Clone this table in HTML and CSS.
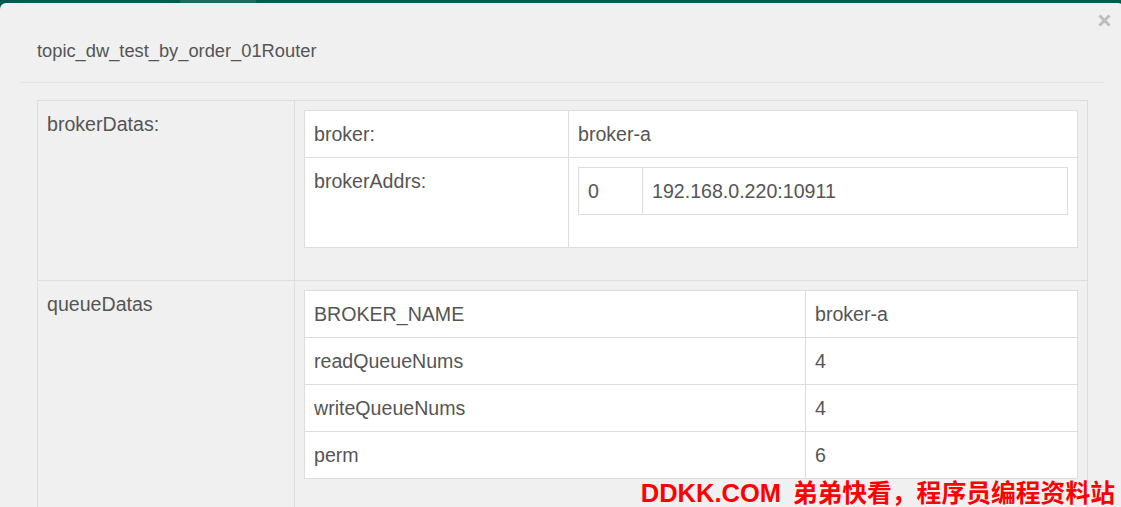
FILE: index.html
```html
<!DOCTYPE html>
<html lang="en">
<head>
    <meta charset="UTF-8">
    <meta name="viewport" content="width=device-width, initial-scale=1.0">
    <title>topic_dw_test_by_order_01Router</title>
    <link rel="stylesheet" href="styles.css">
</head>
<body>
    <div class="navbar"><div class="nav-active"></div></div>
    <div class="modal">
        <button class="close" type="button" aria-label="Close">
            <svg width="13" height="13" viewBox="0 0 13 13"><path d="M1.5 1.5 L11.5 11.5 M11.5 1.5 L1.5 11.5"/></svg>
        </button>
        <div class="modal-header">
            <h4 class="modal-title">topic_dw_test_by_order_01Router</h4>
        </div>
        <div class="modal-body">
            <table class="table outer">
                <colgroup><col class="col-key"><col></colgroup>
                <tr>
                    <td>brokerDatas:</td>
                    <td>
                        <table class="table inner">
                            <colgroup><col class="col-broker"><col></colgroup>
                            <tr>
                                <td>broker:</td>
                                <td>broker-a</td>
                            </tr>
                            <tr>
                                <td>brokerAddrs:</td>
                                <td>
                                    <table class="table inner">
                                        <colgroup><col class="col-index"><col></colgroup>
                                        <tr>
                                            <td>0</td>
                                            <td>192.168.0.220:10911</td>
                                        </tr>
                                    </table>
                                </td>
                            </tr>
                        </table>
                    </td>
                </tr>
                <tr>
                    <td>queueDatas</td>
                    <td>
                        <table class="table inner">
                            <colgroup><col class="col-queue"><col></colgroup>
                            <tr><td>BROKER_NAME</td><td>broker-a</td></tr>
                            <tr><td>readQueueNums</td><td>4</td></tr>
                            <tr><td>writeQueueNums</td><td>4</td></tr>
                            <tr><td>perm</td><td>6</td></tr>
                        </table>
                    </td>
                </tr>
            </table>
        </div>
    </div>
    <div class="watermark"><span class="watermark-site">DDKK.COM</span> 弟弟快看，程序员编程资料站</div>
</body>
</html>
```

FILE: styles.css
```css
body {
    margin: 0;
    background: #005a4f;
    font-family: "Liberation Sans", Arial, sans-serif;
    color: #555;
    overflow: hidden;
    height: 507px;
}
.navbar {
    height: 3px;
    padding-left: 180px;
}
.nav-active {
    width: 76px;
    height: 3px;
    background: #1c6b61;
}
.modal {
    position: relative;
    width: 1124px;
    height: 504px;
    background: #f0f0f0;
    border-radius: 6px 6px 0 0;
}
.close {
    position: absolute;
    top: 11px;
    right: 13px;
    padding: 0;
    border: none;
    background: none;
    line-height: 0;
}
.close svg path {
    stroke: #bdbdbd;
    stroke-width: 3;
    fill: none;
}
.modal-header {
    margin: 0 20px;
    padding: 35px 17px 18px;
    border-bottom: 1px solid #e3e3e3;
}
.modal-title {
    margin: 0;
    font-size: 18.3px;
    line-height: 26px;
    font-weight: normal;
    color: #555;
}
.modal-body {
    padding: 17px 36px 17px 37px;
}
.table {
    width: 100%;
    border-collapse: separate;
    border-spacing: 0;
    border-top: 1px solid #ddd;
    border-left: 1px solid #ddd;
    table-layout: fixed;
}
.table td {
    padding: 9px 9px 8px;
    border-right: 1px solid #ddd;
    border-bottom: 1px solid #ddd;
    vertical-align: top;
    font-size: 19.6px;
    line-height: 29px;
    color: #555;
}
.inner {
    margin-bottom: 24px;
    background: #fff;
}
.col-key {
    width: 257px;
}
.col-broker {
    width: 264px;
}
.col-index {
    width: 64px;
}
.col-queue {
    width: 501px;
}
.watermark {
    position: absolute;
    right: 6px;
    bottom: 0;
    font-family: "Noto Sans CJK SC", sans-serif;
    font-size: 24.8px;
    font-weight: bold;
    line-height: 27px;
    color: #ff0000;
    white-space: nowrap;
}
.watermark-site {
    margin-right: 6px;
    font-family: "Liberation Sans", Arial, sans-serif;
    font-size: 25.5px;
}
```
